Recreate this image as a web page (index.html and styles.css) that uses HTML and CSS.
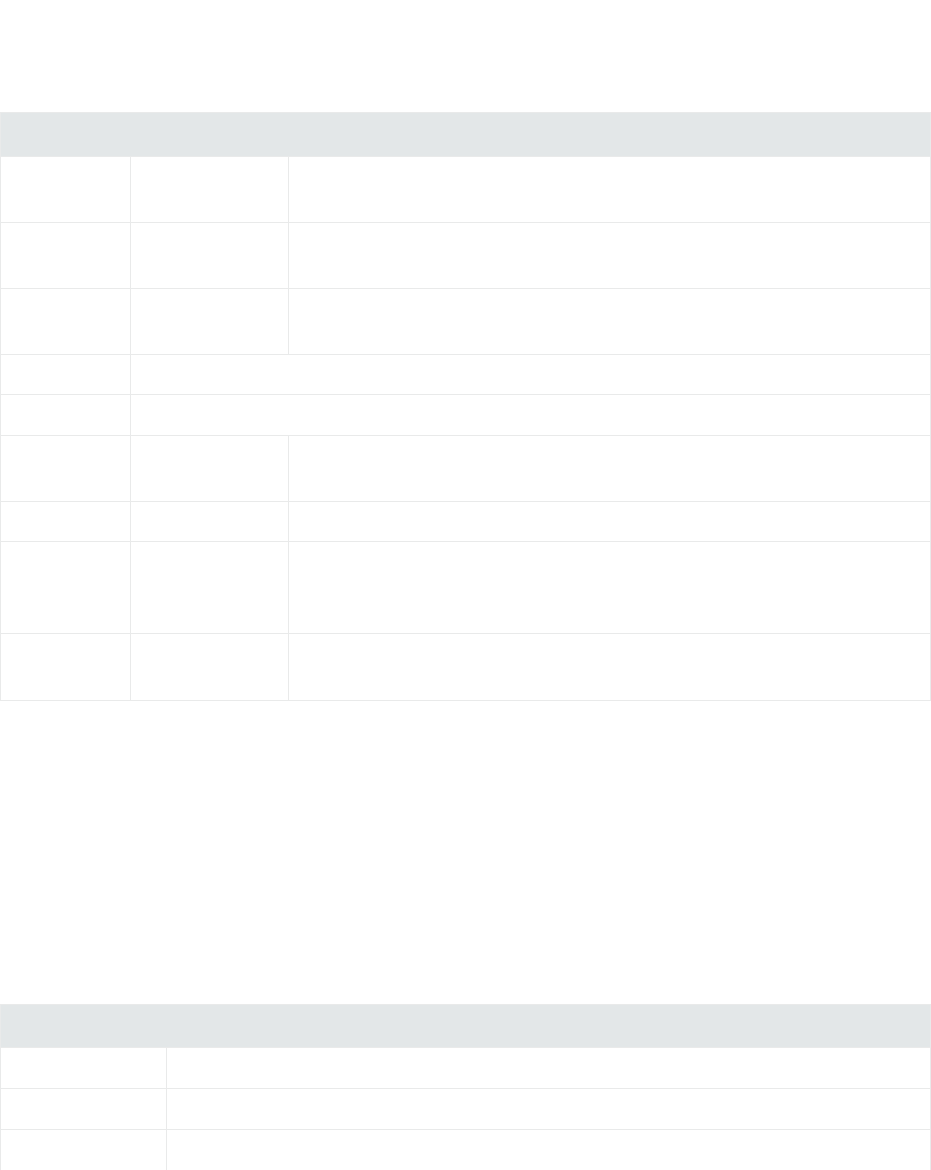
FILE: index.html
```html
<!DOCTYPE html>
<html lang="en">
<head>
<meta charset="utf-8">
<title>Tables</title>
<link rel="stylesheet" href="styles.css">
</head>
<body>
<main class="page">
  <table class="grid grid-main">
    <colgroup>
      <col class="c1"><col class="c2"><col class="c3">
    </colgroup>
    <thead>
      <tr class="h-head"><th colspan="3"></th></tr>
    </thead>
    <tbody>
      <tr class="h-2"><td></td><td></td><td></td></tr>
      <tr class="h-2"><td></td><td></td><td></td></tr>
      <tr class="h-2"><td></td><td></td><td></td></tr>
      <tr class="h-1"><td></td><td colspan="2"></td></tr>
      <tr class="h-1b"><td></td><td colspan="2"></td></tr>
      <tr class="h-2"><td></td><td></td><td></td></tr>
      <tr class="h-1"><td></td><td></td><td></td></tr>
      <tr class="h-3"><td></td><td></td><td></td></tr>
      <tr class="h-2b"><td></td><td></td><td></td></tr>
    </tbody>
  </table>

  <table class="grid grid-second">
    <colgroup>
      <col class="d1"><col class="d2">
    </colgroup>
    <thead>
      <tr class="h-head2"><th colspan="2"></th></tr>
    </thead>
    <tbody>
      <tr class="h-1b"><td></td><td></td></tr>
      <tr class="h-1b"><td></td><td></td></tr>
      <tr class="h-1b"><td></td><td></td></tr>
    </tbody>
  </table>
</main>
</body>
</html>
```

FILE: styles.css
```css
html, body {
  margin: 0;
  padding: 0;
  background: #ffffff;
  font-family: "Open Sans", "Liberation Sans", sans-serif;
  font-size: 14px;
  color: #333333;
}

.page {
  display: flex;
  flex-direction: column;
  padding-top: 112px;
}

.grid {
  width: 931px;
  border-collapse: collapse;
  table-layout: fixed;
}

.grid th,
.grid td {
  padding: 0;
  border: 1px solid #e9eaea;
}

.grid th {
  background: #e3e7e8;
}

.grid-main .c1 { width: 130px; }
.grid-main .c2 { width: 158px; }
.grid-main .c3 { width: auto; }

.grid-second {
  margin-top: 303px;
}
.grid-second .d1 { width: 166px; }
.grid-second .d2 { width: auto; }

.h-head th { height: 43px; }
.h-head2 th { height: 42px; }
.h-2 td { height: 65px; }
.h-2b td { height: 66px; }
.h-1 td { height: 39px; }
.h-1b td { height: 40px; }
.h-3 td { height: 91px; }
```
